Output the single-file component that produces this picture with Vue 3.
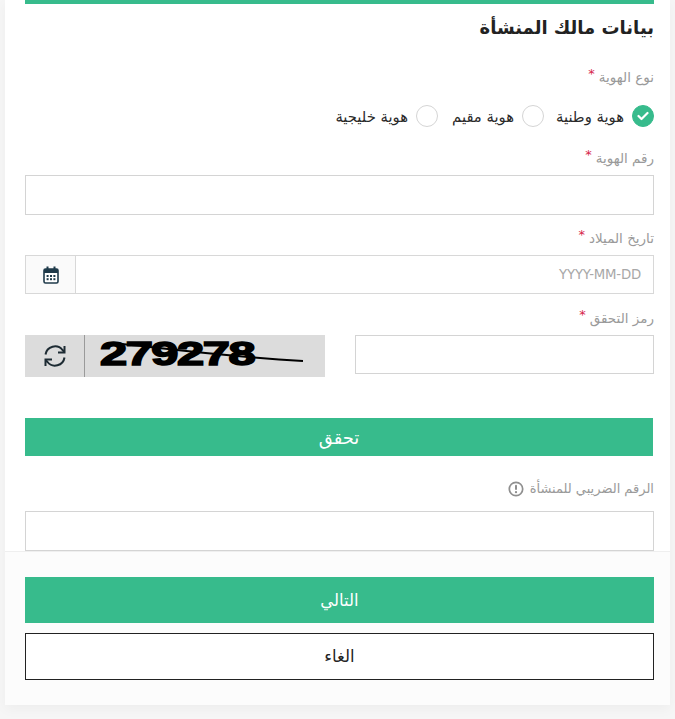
<script setup>
const radios = [
  { label: 'هوية وطنية', on: true },
  { label: 'هوية مقيم', on: false },
  { label: 'هوية خليجية', on: false },
]
</script>

<template>
  <div class="page" dir="rtl">
    <main class="card">
      <section class="form">
        <div class="topbar"></div>
        <h1 class="title">بيانات مالك المنشأة</h1>

        <div class="label l-type">نوع الهوية <span class="req">*</span></div>
        <div class="radios">
          <div v-for="r in radios" :key="r.label" class="radio">
            <span class="dot" :class="{ on: r.on }">
              <svg v-if="r.on" width="12" height="10" viewBox="0 0 12 10"><path d="M1.5 5l3 3 6-6" fill="none" stroke="#fff" stroke-width="2.2" stroke-linecap="round" stroke-linejoin="round"/></svg>
            </span>
            <span class="radio-text">{{ r.label }}</span>
          </div>
        </div>

        <div class="label l-id">رقم الهوية <span class="req">*</span></div>
        <div class="input h40"></div>

        <div class="label l-date">تاريخ الميلاد <span class="req">*</span></div>
        <div class="date">
          <div class="date-field">YYYY-MM-DD</div>
          <div class="date-icon">
            <svg width="16" height="18" viewBox="0 0 16 18">
              <rect x="1" y="3" width="14" height="14" rx="1.5" fill="#fff" stroke="#1f3a4a" stroke-width="1.6"/>
              <rect x="1" y="3" width="14" height="4" fill="#1f3a4a"/>
              <rect x="3.5" y="0.5" width="2" height="4" fill="#1f3a4a"/>
              <rect x="10.5" y="0.5" width="2" height="4" fill="#1f3a4a"/>
              <g fill="#1f3a4a">
                <rect x="3.6" y="9" width="2" height="2"/><rect x="7" y="9" width="2" height="2"/><rect x="10.4" y="9" width="2" height="2"/>
                <rect x="3.6" y="12.2" width="2" height="2"/><rect x="7" y="12.2" width="2" height="2"/><rect x="10.4" y="12.2" width="2" height="2"/>
              </g>
            </svg>
          </div>
        </div>

        <div class="label l-code">رمز التحقق <span class="req">*</span></div>
        <div class="captcha-row">
          <div class="input code"></div>
          <div class="captcha" dir="ltr">
            <div class="refresh">
              <svg width="24" height="24" viewBox="0 0 24 24" fill="none" stroke="#1d2b33" stroke-width="2">
                <path d="M2.5 10.5A9.6 9.6 0 0 1 19.5 6L21.5 8"/>
                <path d="M21.5 2v6.5H15"/>
                <path d="M21.5 13.5A9.6 9.6 0 0 1 4.5 18L2.5 16"/>
                <path d="M2.5 22v-6.5H9"/>
              </svg>
            </div>
            <div class="captcha-img">
              <span class="digits">279278</span>
              <svg class="strike" width="240" height="42" viewBox="0 0 240 42">
                <path d="M28 8 C70 12 120 20 218 26" fill="none" stroke="#000" stroke-width="2"/>
              </svg>
            </div>
          </div>
        </div>

        <button class="verify">تحقق</button>

        <div class="label l-tax">
          الرقم الضريبي للمنشأة
          <svg class="info" width="16" height="16" viewBox="0 0 16 16">
            <circle cx="8" cy="8" r="6.7" fill="none" stroke="#8f8f8f" stroke-width="1.7"/>
            <rect x="7" y="3.7" width="2" height="5.4" rx="1" fill="#8f8f8f"/>
            <circle cx="8" cy="11.2" r="1.15" fill="#8f8f8f"/>
          </svg>
        </div>
        <div class="input h40"></div>
      </section>

      <footer class="footer">
        <button class="next">التالي</button>
        <button class="cancel">الغاء</button>
      </footer>
    </main>
  </div>
</template>

<style>
html, body { margin: 0; background: #f6f6f6; }
</style>

<style scoped>
.page {
  width: 675px;
  height: 719px;
  padding: 0 5px 14px 5px;
  box-sizing: border-box;
  background: #f6f6f6;
  font-family: "DejaVu Sans", "Noto Sans", sans-serif;
  overflow: hidden;
}
.card {
  background: #fff;
  height: 705px;
  display: flex;
  flex-direction: column;
  box-shadow: 0 4px 12px rgba(0, 0, 0, 0.04);
}
.form {
  padding: 0 16px 0 20px;
  height: 551px;
  box-sizing: border-box;
}
.topbar { height: 4px; background: #37bb8c; }
.title {
  margin: 11px 0 0;
  height: 26px;
  font-size: 18px;
  line-height: 26px;
  font-weight: 700;
  color: #222;
}
.label {
  font-size: 13.5px;
  line-height: 18px;
  height: 18px;
  color: #9a9a9a;
  display: flex;
  align-items: center;
  gap: 4px;
}
.req { color: #d6254a; font-size: 13px; position: relative; top: -3px; }
.l-type { margin-top: 27px; }
.l-id { margin-top: 22px; }
.l-date { margin-top: 14px; }
.l-code { margin-top: 15px; }
.l-tax { margin-top: 24px; gap: 6px; font-size: 13px; }
.l-id, .l-date, .l-code { margin-bottom: 8px; }
.l-tax { margin-bottom: 13px; }
.radios {
  display: flex;
  margin-top: 19px;
  height: 22px;
  gap: 12px;
}
.radio { display: flex; align-items: center; gap: 8px; }
.radio:nth-child(2) { margin-left: 2px; }
.dot {
  width: 22px;
  height: 22px;
  box-sizing: border-box;
  border-radius: 50%;
  border: 1px solid #d5d5d5;
  background: #fff;
  display: flex;
  align-items: center;
  justify-content: center;
}
.dot.on { background: #37bb8c; border-color: #37bb8c; }
.radio-text { font-size: 14.8px; color: #2a2a2a; }
.input {
  border: 1px solid #d4d4d4;
  background: #fff;
  box-sizing: border-box;
}
.h40 { height: 40px; }
.date {
  display: flex;
  height: 39px;
  border: 1px solid #d8d8d8;
  box-sizing: border-box;
}
.date-field {
  flex: 1;
  display: flex;
  align-items: center;
  padding: 0 12px 0 0;
  font-family: "DejaVu Sans", sans-serif;
  font-size: 13.3px;
  color: #a8a8a8;
  letter-spacing: -0.2px;
}
.date-icon {
  width: 49px;
  background: #fafafa;
  border-right: 1px solid #d8d8d8;
  display: flex;
  align-items: center;
  justify-content: center;
}
.captcha-row {
  display: flex;
  justify-content: space-between;
  align-items: flex-start;
  height: 42px;
}
.code { width: 299px; height: 39px; }
.captcha {
  width: 300px;
  height: 42px;
  background: #dcdcdc;
  display: flex;
}
.refresh {
  width: 59px;
  border-right: 1px solid #9a9a9a;
  display: flex;
  align-items: center;
  justify-content: center;
}
.captcha-img { flex: 1; position: relative; overflow: hidden; }
.digits {
  position: absolute;
  left: 15px;
  top: 4px;
  font-family: "Liberation Sans", sans-serif;
  font-weight: 700;
  font-size: 33px;
  line-height: 30px;
  color: #000;
  -webkit-text-stroke: 1.6px #000;
  transform: scaleX(1.48);
  transform-origin: left center;
  letter-spacing: -1px;
}
.strike { position: absolute; left: 0; top: 0; }
button {
  display: block;
  width: 100%;
  box-sizing: border-box;
  font-family: "DejaVu Sans", sans-serif;
  cursor: pointer;
}
.verify {
  margin-top: 41px;
  height: 38px;
  width: 628px;
  margin-right: 1px;
  border: 0;
  background: #37bb8c;
  color: #fff;
  font-size: 18px;
}
.footer {
  flex: 1;
  background: #fcfcfc;
  border-top: 1px solid #efefef;
  padding: 25px 16px 0 20px;
  box-sizing: border-box;
}
.next {
  height: 46px;
  border: 0;
  background: #37bb8c;
  color: #fff;
  font-size: 16.5px;
}
.cancel {
  margin-top: 10px;
  height: 47px;
  background: #fff;
  border: 1px solid #222;
  color: #222;
  font-size: 16.5px;
}
</style>
